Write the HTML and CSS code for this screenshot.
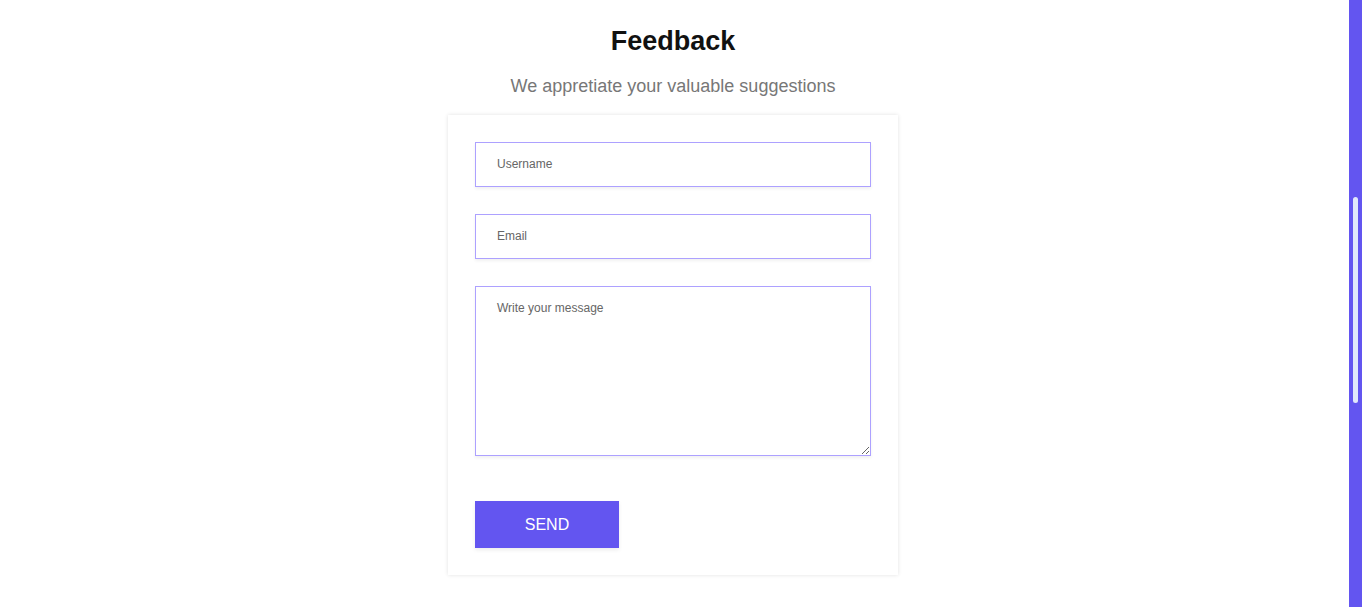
FILE: index.html
```html
<!DOCTYPE html>
<html lang="en">

<head>
    <meta charset="UTF-8">
    <meta name="viewport" content="width=device-width, initial-scale=1.0">
    <title>Feedback</title>

    <link rel="stylesheet" href="styles.css">
</head>

<body>
    <div class="page">
        <section class="feedback">
            <h1>Feedback</h1>
            <p class="subtitle">We appretiate your valuable suggestions</p>

            <form class="feedback-form" onsubmit="event.preventDefault();">
                <input type="text" placeholder="Username">
                <input type="email" placeholder="Email">
                <textarea placeholder="Write your message"></textarea>
                <button type="submit">SEND</button>
            </form>
        </section>

        <!-- Purple scroll rail -->
        <div class="scroll-rail">
            <div class="scroll-thumb"></div>
        </div>
    </div>
</body>
</html>
```

FILE: styles.css
```css
* {
    margin: 0;
    padding: 0;
    box-sizing: border-box;
    font-family: "Liberation Sans", Arial, sans-serif;
}

body {
    background-color: #ffffff;
    color: #111111;
    overflow: hidden;
}

.page {
    display: flex;
    height: 100vh;
}

.feedback {
    flex: 1;
    display: flex;
    flex-direction: column;
    align-items: center;
    padding: 26px 3px 0 0;
}

h1 {
    font-size: 27px;
    font-weight: bold;
    line-height: 31px;
}

.subtitle {
    margin-top: 19px;
    font-size: 18px;
    line-height: 21px;
    color: #777777;
}

.feedback-form {
    display: flex;
    flex-direction: column;
    align-items: flex-start;
    width: 450px;
    margin-top: 18px;
    padding: 27px;
    background-color: #ffffff;
    box-shadow: 0px 0px 4px rgba(0, 0, 0, 0.12);
}

.feedback-form input,
.feedback-form textarea {
    width: 100%;
    padding: 0 21px;
    font-size: 12px;
    color: #333333;
    border: 1px solid #ada1ff;
    box-shadow: 0px 2px 3px rgba(0, 0, 0, 0.06);
    outline: none;
}

.feedback-form input {
    height: 45px;
    margin-bottom: 27px;
    padding-bottom: 1px;
}

.feedback-form textarea {
    height: 170px;
    padding-top: 14px;
    margin-bottom: 45px;
}

.feedback-form input::placeholder,
.feedback-form textarea::placeholder {
    color: #666666;
}

.feedback-form button {
    width: 144px;
    height: 47px;
    font-size: 16px;
    color: #ffffff;
    background-color: #6355f0;
    border: none;
    box-shadow: 0px 2px 4px rgba(0, 0, 0, 0.08);
    cursor: pointer;
}

.feedback-form button:hover {
    background-color: #5244e0;
}

.scroll-rail {
    width: 13px;
    padding: 197px 4px 0 4px;
    background-color: #6355f0;
}

.scroll-thumb {
    height: 206px;
    background-color: #e1e8fb;
    border-radius: 3px;
}
```
